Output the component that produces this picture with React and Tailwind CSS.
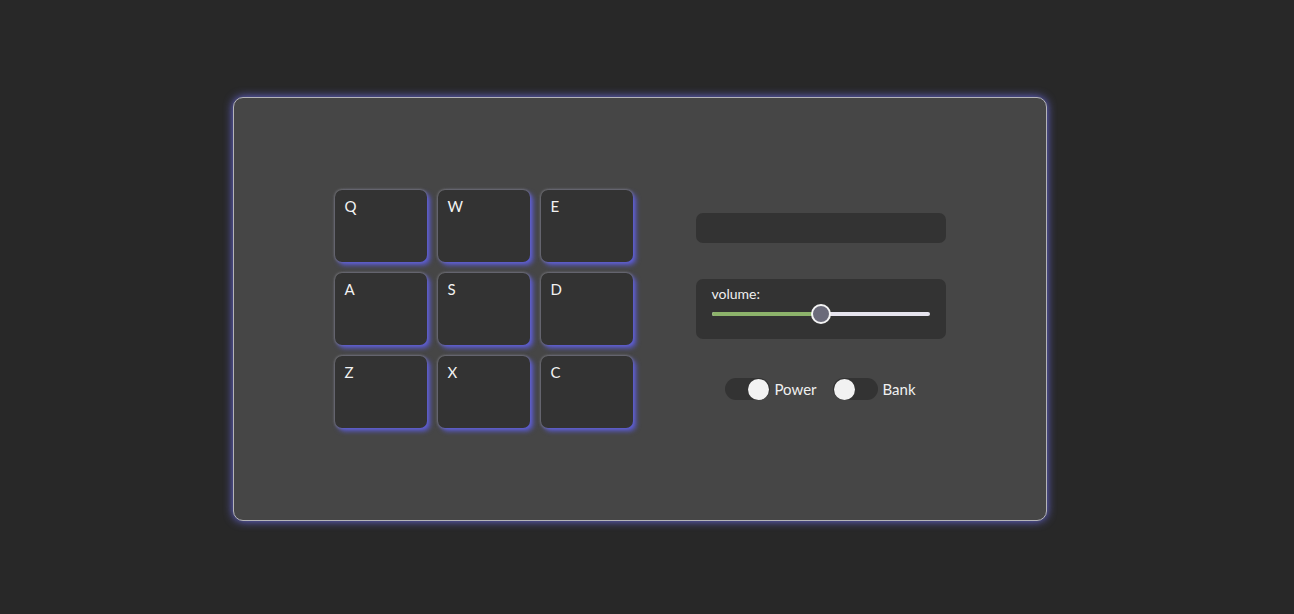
import React from 'react';

const keys = ['Q', 'W', 'E', 'A', 'S', 'D', 'Z', 'X', 'C'];

const Pad = ({ label }) => (
    <div className="w-[92px] h-[72px] rounded-[7px] bg-[#333333] px-[10px] pt-[5px] text-[15px] text-[#f2f2f2] shadow-[3px_3px_5px_#5b5bd8,0_0_3px_#a0a0a0]">
        {label}
    </div>
);

const Toggle = ({ on }) => (
    <div className={`w-[45px] h-[22px] rounded-full bg-[#333333] flex items-center px-[1px] ${on ? 'justify-end' : 'justify-start'}`}>
        <div className="w-[21px] h-[21px] rounded-full bg-[#f2f2f2]"></div>
    </div>
);

export default function App() {
    const volume = 0.5;
    return (
        <div className="min-h-screen bg-[#282828] pt-[97px]" style={{ fontFamily: 'Lato, "Noto Sans", sans-serif' }}>
            <div className="ml-[233px] w-[814px] h-[424px] rounded-[10px] border border-[#b4b4b8] bg-[#464646] shadow-[0_0_10px_#6a6ae0] flex items-center justify-center gap-[63px]">
                <div className="grid grid-cols-3 gap-[11px]">
                    {keys.map((k) => <Pad key={k} label={k} />)}
                </div>
                <div className="w-[250px] flex flex-col items-center pb-[5px]">
                    <div className="w-full h-[30px] rounded-[7px] bg-[#333333]"></div>
                    <div className="w-full h-[60px] mt-[36px] rounded-[7px] bg-[#333333] px-[16px] pt-[6px]">
                        <div className="text-[14px] text-[#f0f0f0] leading-[18px]">volume:</div>
                        <div className="relative mt-[9px] h-[4px] rounded-full bg-[#e6e4ee]">
                            <div className="h-full rounded-full bg-[#8db36b]" style={{ width: `${volume * 100}%` }}></div>
                            <div className="absolute top-1/2 -translate-y-1/2 -translate-x-1/2 w-[20px] h-[20px] rounded-full bg-[#6b6b7a] border-2 border-[#f4f4f4]" style={{ left: `${volume * 100}%` }}></div>
                        </div>
                    </div>
                    <div className="mt-[39px] flex items-center text-[15px] text-[#f0f0f0]">
                        <Toggle on />
                        <span className="ml-[4px] mr-[16px]">Power</span>
                        <Toggle />
                        <span className="ml-[5px]">Bank</span>
                    </div>
                </div>
            </div>
        </div>
    );
}
